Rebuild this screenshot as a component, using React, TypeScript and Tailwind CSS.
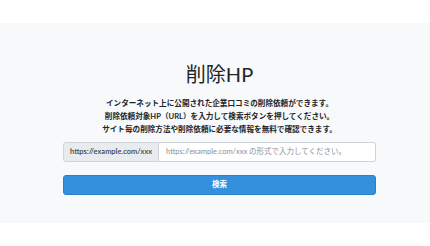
import React from 'react';

const jp = { fontFamily: '"Lato", "Noto Sans CJK JP", sans-serif' };

export default function App() {
  return (
    <div className="h-[246px] w-[430px] bg-white" style={jp}>
      <div className="h-[23px]" />
      <section className="h-[200px] bg-[#f8f9fb] pt-[37px]">
        <div className="ml-[63px] w-[313px]">
          <h1 className="text-center text-[20px] leading-[28px] font-normal text-[#212529]">削除HP</h1>
          <div className="mt-[9px] text-center text-[7.6px] leading-[13px] font-bold text-[#212529]">
            <p>インターネット上に公開された企業口コミの削除依頼ができます。</p>
            <p>削除依頼対象HP（URL）を入力して検索ボタンを押してください。</p>
            <p>サイト毎の削除方法や削除依頼に必要な情報を無料で確認できます。</p>
          </div>
          <div className="mt-[6px] flex h-[20px]">
            <span className="flex items-center rounded-l-[3px] border border-[#ced4da] bg-[#e9ecef] px-[6px] text-[7.5px] font-semibold text-[#3b4046]">
              https://example.com/xxx
            </span>
            <input
              className="min-w-0 flex-1 rounded-r-[3px] border border-l-0 border-[#ced4da] bg-white px-[7px] text-[7.5px] text-[#495057] placeholder:text-[#8a9096] outline-none"
              placeholder="https://example.com/xxx の形式で入力してください。"
            />
          </div>
          <button className="mt-[13px] flex h-[20px] w-full items-center justify-center rounded-[3px] border border-[#2a80cc] bg-[#3490dc] text-[7.5px] font-bold text-white">
            検索
          </button>
        </div>
      </section>
    </div>
  );
}
